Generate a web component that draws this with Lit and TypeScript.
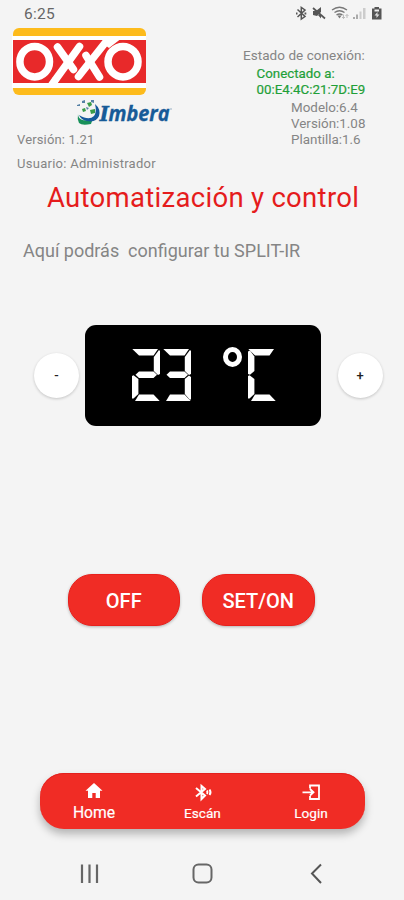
import { LitElement, html, css, svg } from "lit";
import { customElement, property } from "lit/decorators.js";

/** Segments lit for each character of the display. */
const SEGMENTS: Record<string, string[]> = {
  "2": ["a", "b", "g", "e", "d"],
  "3": ["a", "b", "g", "c", "d"],
  C: ["a", "f", "e", "d"],
};

@customElement("segment-char")
class SegmentChar extends LitElement {
  @property() char = "";

  static styles = css`
    :host { display: block; width: 28px; height: 52px; }
    svg { display: block; fill: #fff; }
  `;

  render() {
    const shapes: Record<string, unknown> = {
      a: svg`<path d="M.3 0H26L21.5 6.6H7Z"/>`,
      b: svg`<path d="M27 1L28 2V25L26 26L21.8 22V8Z"/>`,
      c: svg`<path d="M26 26.6L28 28V50L27 51L21.8 45V30Z"/>`,
      d: svg`<path d="M7 45.6H21.5L27.7 52H3Z"/>`,
      e: svg`<path d="M0 27L1.5 26.3L6.4 30V45L1.5 49.5H0Z"/>`,
      f: svg`<path d="M0 2.5L2 1.5L6.4 7.5V22L2 25.7L0 25Z"/>`,
      g: svg`<path d="M3.5 25.7L7 22.5H21.5L25 25.7L21.5 29H7Z"/>`,
    };
    return html`<svg width="28" height="52" viewBox="0 0 28 52" role="img" aria-label=${this.char}>
      ${(SEGMENTS[this.char] ?? []).map((s) => shapes[s])}
    </svg>`;
  }
}

@customElement("app-root")
class AppRoot extends LitElement {
  static styles = css`
    :host {
      display: block; width: 404px; height: 900px; overflow: hidden;
      background: #f4f4f4; color: #858585;
      font-family: Roboto, sans-serif;
    }
    * { box-sizing: border-box; }
    svg { display: block; }
    .screen { display: flex; flex-direction: column; height: 900px; }
    .status { display: flex; justify-content: space-between; height: 28px; padding: 5px 21px 0 24px; }
    .clock { font-size: 15.5px; line-height: 18px; color: #666; letter-spacing: .25px; }
    .header { display: flex; justify-content: space-between; height: 147px; }
    .brand { width: 190px; padding-left: 12px; }
    .imbera { margin: 3px 0 0 64px; }
    .meta { padding-left: 5px; font-size: 13px; line-height: 24px; white-space: pre; letter-spacing: .28px; }
    .meta .v { line-height: 24px; height: 24px; margin-top: 1px; letter-spacing: .15px; }
    .conn { width: 161px; padding-top: 19px; white-space: nowrap; font-size: 13px; line-height: 16px; }
    .state { font-size: 13.5px; letter-spacing: .05px; height: 19px; }
    .green { color: #1fa038; padding-left: 13.5px; font-size: 13.3px; letter-spacing: .02px; -webkit-text-stroke: .2px #1fa038; }
    .info { padding: 2px 0 0 48px; font-size: 13.4px; line-height: 15.8px; letter-spacing: 0; }
    h1 { margin: 5px 0 0 47px; font-size: 27.5px; line-height: 36px; font-weight: 400; color: #e51c1c; letter-spacing: .3px; white-space: nowrap; }
    .intro { margin: 24px 0 0 23px; font-size: 18px; line-height: 22px; white-space: pre; }
    .thermo { display: flex; align-items: center; gap: 6px; margin: 63px 0 0 34px; height: 101px; }
    .round { width: 45px; height: 45px; border: 0; padding: 0; border-radius: 50%; background: #fff; box-shadow: 0 1px 3px #0003; font: 500 13px Roboto, sans-serif; color: #222; }
    .round:last-child { margin-left: 10.5px; }
    .lcd { display: flex; width: 236px; height: 101px; padding: 24px 0 0 47px; border-radius: 11px; background: #000; }
    .lcd segment-char + segment-char { margin-left: 3px; }
    .deg { width: 19px; height: 20px; margin: -2px 6px 0 32px; border: 5.3px solid #fff; border-radius: 50%; }
    .actions { display: flex; gap: 22px; margin: 148px 0 0 67.5px; }
    .pill { width: 112.5px; height: 52px; padding: 2px 0 0; border: 1px solid #e8201c; border-radius: 24px; background: #f02c25; color: #fff; font: 500 20px Roboto, sans-serif; box-shadow: 0 1px 3px #0004; }
    .tabs { display: flex; justify-content: space-between; width: 325px; height: 56px; margin: 147px 0 0 40px; padding: 0 20px; border-radius: 24px; background: #f02c25; box-shadow: 0 5px 9px #0004, inset 0 1px #e3201d; color: #fff; }
    .tab { display: flex; flex-direction: column; align-items: center; width: 68px; padding-top: 9px; font-size: 13.6px; line-height: 20px; -webkit-text-stroke: .2px #fff; }
    .tab svg { height: 20px; margin-bottom: 1px; }
    .tab.on { font-size: 15.7px; line-height: 20px; }
    .keys { display: flex; justify-content: space-between; padding: 33px 77px 0 79px; }
  `;

  statusIcons() {
    return html`<svg width="90" height="20" viewBox="293 5 90 20">
      <g fill="none" stroke="#555" stroke-width="1.5">
        <path d="M297.500 9.500L305 16.500L301.300 19V7.500L305 10L297.500 17"/>
        <path d="M296 13.500h1.500M304.500 13.500h1.800" stroke-width="1.800"/>
        <path d="M313 8L325 18.500" stroke-width="1.700"/>
        <path d="M332 10Q339.500 4.500 347 10M334.500 12.500Q339.500 9 344.500 12.500M336.500 15Q339.500 13 342.500 15" stroke="#777" stroke-width="1.300"/>
        <path d="M343.500 14.500v4M342 17l1.500 1.500l1.500-1.500M347 18v-3.500M345.500 16l1.500-1.500l1.500 1.500" stroke="#bbb" stroke-width="1"/>
      </g>
      <path fill="#777" d="M337.500 15.500h4l-2 3Z"/>
      <path fill="#555" d="M313 11h3l5-4v5l-4 4-4-1ZM318 15l3-1v4.500Z"/>
      <path fill="#aaa" d="M353 17h2v2h-2ZM356 14.500h2v4.500h-2Z"/>
      <path fill="#ccc" d="M359.500 11.500h2v7.500h-2ZM363 8h2.500v11H363Z"/>
      <path fill="#555" d="M374.500 7h4.500v1.500h2.500v11h-9.500v-11h2.500Z"/>
      <path fill="#eee" d="M374.500 9.500h4.500v2h-4.500Z"/>
      <path fill="#ddd" d="M377.500 12l-3 3.500h2v2.500l3-3.500h-2Z"/>
    </svg>`;
  }

  oxxo() {
    return html`<svg width="134" height="67" viewBox="12 28 134 67" role="img" aria-label="OXXO">
      <defs><clipPath id="band"><rect x="12" y="36" width="134" height="52"/></clipPath></defs>
      <rect x="13" y="28" width="133" height="67" rx="6" fill="#fdbb1c"/>
      <path fill="#fff" d="M12 36H146V88H12Z"/>
      <path fill="#e8292a" d="M13 40H146V83H13Z"/>
      <g clip-path="url(#band)" fill="none" stroke="#fff" stroke-width="7.500" stroke-linecap="round">
        <ellipse cx="34.700" cy="61.700" rx="14.800" ry="15.200"/>
        <ellipse cx="123" cy="61.700" rx="15" ry="15.200"/>
        <path d="M109 38L78.500 76.500M79.500 46.500L52 84.500"/>
        <path d="M57.500 47L73.500 69.500M86 55.500L99.500 77"/>
      </g>
      <path fill="#fff" d="M104 39.500H120L109 48L103.500 44ZM49 84H57L59 80L53 77Z"/>
    </svg>`;
  }

  imbera() {
    return html`<svg class="imbera" width="98" height="29" viewBox="76 98 98 29">
      <path fill="#18915a" d="M78 114C78 121 87 122 93 118L91 124Q82 126 79 123Q77 119 78 114Z"/>
      <path fill="#165a9c" d="M95 104Q101 109 99 116Q96 123 87 121Q81 120 79 115Q89 121 94 116Q97 112 95 104Z"/>
      <path fill="#3a9c49" d="M87 103l4-1 1 3-3 2ZM90 110l5-1v4l-4 1ZM82 109l3-1 1 3-3 1Z"/>
      <path fill="#5681a5" d="M82 101l3-1v3h-3ZM77 105l3-1v2h-3ZM91 100h3v3l-3-1ZM86 107l3 1-2 2Z"/>
      <g font-weight="700" font-style="italic" fill="#175b98" stroke="#175b98" stroke-width=".3">
        <text x="99.500" y="121" font-size="20" font-family="DejaVu Serif" textLength="9.500" lengthAdjust="spacingAndGlyphs">I</text>
        <text x="108.500" y="121" font-size="20.500" font-family="Open Sans" textLength="61" lengthAdjust="spacingAndGlyphs">mbera</text>
      </g>
      <circle cx="171" cy="109" r=".7" fill="#7896b2"/>
    </svg>`;
  }

  render() {
    return html`<div class="screen">
      <div class="status"><span class="clock">6:25</span>${this.statusIcons()}</div>
      <div class="header">
        <div class="brand">
          ${this.oxxo()}${this.imbera()}
          <div class="meta"><div class="v">Versión: 1.21</div><div>Usuario: Administrador</div></div>
        </div>
        <div class="conn">
          <div class="state">Estado de conexión:</div>
          <div class="green">Conectado a:<br>00:E4:4C:21:7D:E9</div>
          <div class="info">Modelo:6.4<br>Versión:1.08<br>Plantilla:1.6</div>
        </div>
      </div>
      <h1>Automatización y control</h1>
      <div class="intro">Aquí podrás  configurar tu SPLIT-IR</div>
      <div class="thermo">
        <button class="round">-</button>
        <div class="lcd">
          <segment-char char="2"></segment-char><segment-char char="3"></segment-char>
          <div class="deg"></div><segment-char char="C"></segment-char>
        </div>
        <button class="round">+</button>
      </div>
      <div class="actions"><button class="pill">OFF</button><button class="pill">SET/ON</button></div>
      <nav class="tabs">
        <div class="tab on">
          <svg width="20" height="20" viewBox="0 0 20 20"><path fill="#fff" d="M10 1L18.500 8.700H16V16H11.700V11H8.300V16H4V8.700H1.500Z"/></svg>Home
        </div>
        <div class="tab">
          <svg width="20" height="20" viewBox="0 0 20 20"><path fill="none" stroke="#fff" stroke-width="2" d="M3 6L12 13.500L8.500 17V4L12 7L3 14.500M14 8.500Q15 10.300 14 12M16.500 7.500Q18.500 10.300 16.500 13"/></svg>Escán
        </div>
        <div class="tab">
          <svg width="20" height="20" viewBox="0 0 20 20"><path fill="none" stroke="#fff" stroke-width="1.800" d="M9 6.500V3.500H18V17H9V14M1.500 10.300H12.500M9 7L12.500 10.300L9 13.500"/></svg>Login
        </div>
      </nav>
      <div class="keys">
        <svg width="22" height="24" viewBox="0 0 22 24"><path fill="none" stroke="#666" stroke-width="2.200" d="M3 2.500V21M10.500 2.500V21M18 2.500V21"/></svg>
        <svg width="22" height="24" viewBox="0 0 22 24"><rect x="1.500" y="2.500" width="18" height="18" rx="5" fill="none" stroke="#666" stroke-width="2"/></svg>
        <svg width="22" height="24" viewBox="0 0 22 24"><path fill="none" stroke="#555" stroke-width="2" d="M16 2.500L7 11.500L16 21"/></svg>
      </div>
    </div>`;
  }
}
